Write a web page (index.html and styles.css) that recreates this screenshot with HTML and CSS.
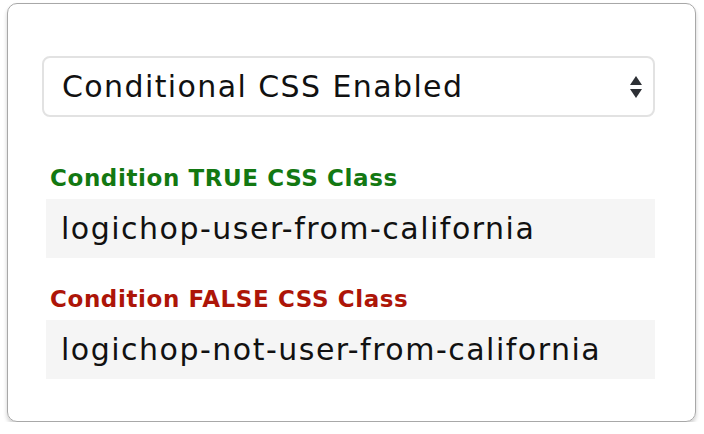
FILE: index.html
```html
<!DOCTYPE html>
<html lang="en">
<head>
  <meta charset="UTF-8" />
  <title>Conditional CSS</title>
  <link rel="stylesheet" href="styles.css">
</head>
<body>
  <!-- Settings panel -->
  <div class="panel">
    <div class="select-box">
      <span class="select-value">Conditional CSS Enabled</span>
      <svg class="select-arrows" width="14" height="24" viewBox="0 0 14 24">
        <polygon points="7,1 13,10 1,10" fill="#2d3035" />
        <polygon points="1,14 13,14 7,23" fill="#2d3035" />
      </svg>
    </div>

    <div class="field">
      <div class="field-label label-true">Condition TRUE CSS Class</div>
      <div class="field-input">logichop-user-from-california</div>
    </div>

    <div class="field">
      <div class="field-label label-false">Condition FALSE CSS Class</div>
      <div class="field-input">logichop-not-user-from-california</div>
    </div>
  </div>
</body>
</html>
```

FILE: styles.css
```css
/* Base */
body {
  margin: 0;
  background: #fff;
  font-family: 'DejaVu Sans', sans-serif;
  color: #111;
}
/* Outer card */
.panel {
  box-sizing: border-box;
  width: 689px;
  height: 419px;
  margin: 3px 0 0 7px;
  padding: 52px 40px 0 34px;
  border: 1px solid #a8a8a8;
  border-radius: 10px;
  box-shadow: 0 3px 4px rgba(0, 0, 0, 0.2);
}
/* Select dropdown */
.select-box {
  box-sizing: border-box;
  height: 61px;
  display: flex;
  align-items: center;
  justify-content: space-between;
  padding: 0 10px 0 18px;
  border: 2px solid #e2e2e2;
  border-radius: 8px;
  font-size: 30px;
  letter-spacing: 1.4px;
}
.select-arrows {
  display: block;
}
/* Label + input pairs */
.field {
  margin-top: 48px;
  padding-left: 4px;
}
.field + .field {
  margin-top: 28px;
}
.field-label {
  font-size: 23px;
  font-weight: 700;
  line-height: 26px;
  letter-spacing: 0.6px;
  padding-left: 4px;
  margin-bottom: 8px;
}
.label-true {
  color: #137812;
}
.label-false {
  color: #ad1508;
}
.field-input {
  background: #f5f5f5;
  height: 59px;
  display: flex;
  align-items: center;
  padding-left: 15px;
  font-size: 30px;
  letter-spacing: 1.5px;
}
```
